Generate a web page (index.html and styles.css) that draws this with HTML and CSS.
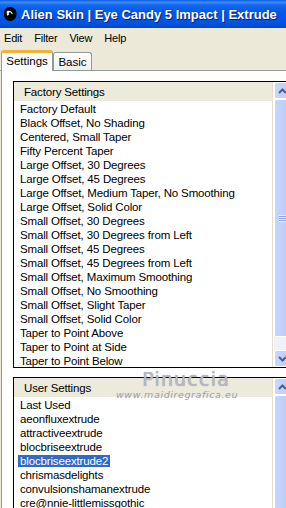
FILE: index.html
```html
<!DOCTYPE html>
<html>
<head>
<meta charset="utf-8">
<link rel="stylesheet" href="styles.css">
</head>
<body>
<div class="window">
  <div class="titlebar">
    <svg class="app-icon" width="14" height="16" viewBox="0 0 14 16">
      <path d="M7 1 C11 1 13.5 4 13.5 8 C13.5 12 11 15 7 15 C3 15 1 12 1 8 C1 4 3 1 7 1 Z" fill="#000"/>
      <path d="M4 5 C6 4 9 5 10 8 C8 7.5 6 8 4.5 10 C3.5 8.5 3.5 6.5 4 5 Z" fill="#fff"/>
      <circle cx="7" cy="7.5" r="1.2" fill="#000"/>
    </svg>
    <span class="title">Alien Skin | Eye Candy 5 Impact | Extrude</span>
  </div>
  <div class="menubar">
    <span class="menu-item">Edit</span>
    <span class="menu-item">Filter</span>
    <span class="menu-item">View</span>
    <span class="menu-item">Help</span>
  </div>
  <div class="tabs">
    <div class="tab active">Settings</div>
    <div class="tab">Basic</div>
  </div>
  <div class="panel">
    <div class="listbox factory">
      <div class="list">
        <div class="list-header">Factory Settings</div>
        <ul class="items">
          <li><span>Factory Default</span></li>
          <li><span>Black Offset, No Shading</span></li>
          <li><span>Centered, Small Taper</span></li>
          <li><span>Fifty Percent Taper</span></li>
          <li><span>Large Offset, 30 Degrees</span></li>
          <li><span>Large Offset, 45 Degrees</span></li>
          <li><span>Large Offset, Medium Taper, No Smoothing</span></li>
          <li><span>Large Offset, Solid Color</span></li>
          <li><span>Small Offset, 30 Degrees</span></li>
          <li><span>Small Offset, 30 Degrees from Left</span></li>
          <li><span>Small Offset, 45 Degrees</span></li>
          <li><span>Small Offset, 45 Degrees from Left</span></li>
          <li><span>Small Offset, Maximum Smoothing</span></li>
          <li><span>Small Offset, No Smoothing</span></li>
          <li><span>Small Offset, Slight Taper</span></li>
          <li><span>Small Offset, Solid Color</span></li>
          <li><span>Taper to Point Above</span></li>
          <li><span>Taper to Point at Side</span></li>
          <li><span>Taper to Point Below</span></li>
        </ul>
      </div>
      <div class="scrollbar">
        <div class="sb-btn up"><svg width="9" height="6" viewBox="0 0 9 6"><path d="M1 5 L4.5 1.5 L8 5" fill="none" stroke="#4d6185" stroke-width="2"/></svg></div>
        <div class="sb-track">
          <div class="sb-thumb factory-thumb"><span class="grip"></span></div>
        </div>
        <div class="sb-btn down"><svg width="9" height="6" viewBox="0 0 9 6"><path d="M1 1 L4.5 4.5 L8 1" fill="none" stroke="#4d6185" stroke-width="2"/></svg></div>
      </div>
    </div>
    <div class="listbox user">
      <div class="list">
        <div class="list-header">User Settings</div>
        <ul class="items">
          <li><span>Last Used</span></li>
          <li><span>aeonfluxextrude</span></li>
          <li><span>attractiveextrude</span></li>
          <li><span>blocbriseextrude</span></li>
          <li class="selected"><span>blocbriseextrude2</span></li>
          <li><span>chrismasdelights</span></li>
          <li><span>convulsionshamanextrude</span></li>
          <li><span>cre@nnie-littlemissgothic</span></li>
        </ul>
      </div>
      <div class="scrollbar">
        <div class="sb-btn up"><svg width="9" height="6" viewBox="0 0 9 6"><path d="M1 5 L4.5 1.5 L8 5" fill="none" stroke="#4d6185" stroke-width="2"/></svg></div>
        <div class="sb-track">
          <div class="sb-thumb user-thumb"></div>
        </div>
      </div>
    </div>
    <div class="watermark">
      <div class="wm-name">Pinuccia</div>
      <div class="wm-url">www.maidiregrafica.eu</div>
    </div>
  </div>
</div>
</body>
</html>
```
FILE: styles.css
```css
html, body {
  margin: 0;
  padding: 0;
}
body {
  width: 286px;
  height: 508px;
  overflow: hidden;
  background: #ece9d8;
  font-family: "Liberation Sans", Arial, sans-serif;
  font-size: 11px;
  letter-spacing: -0.2px;
  color: #000;
}
.window {
  width: 286px;
  height: 508px;
  display: flex;
  flex-direction: column;
}
.titlebar {
  height: 28px;
  flex: none;
  display: flex;
  align-items: center;
  background: linear-gradient(to bottom, #0a5ae6 0%, #3d8cf6 8%, #1367ec 18%, #0058e8 45%, #0054e3 80%, #0048c8 100%);
  padding-left: 3px;
  box-sizing: border-box;
  white-space: nowrap;
  overflow: hidden;
}
.app-icon {
  flex: none;
  margin-right: 4px;
}
.title {
  color: #fff;
  font-weight: bold;
  font-size: 13px;
  letter-spacing: 0;
  text-shadow: 1px 1px 0 #0a1e7a;
}
.menubar {
  height: 20px;
  flex: none;
  display: flex;
  align-items: center;
  gap: 12px;
  padding-left: 4px;
  box-sizing: border-box;
  background: #ece9d8;
}
.tabs {
  height: 23px;
  flex: none;
  display: flex;
  align-items: flex-end;
  padding-left: 1px;
  box-sizing: border-box;
  border-bottom: 1px solid #919b9c;
}
.tab {
  box-sizing: border-box;
  border: 1px solid #919b9c;
  border-bottom: none;
  border-radius: 3px 3px 0 0;
  display: flex;
  align-items: center;
  justify-content: center;
  font-size: 11.5px;
  letter-spacing: 0;
}
.tab.active {
  width: 52px;
  height: 21px;
  margin-bottom: -1px;
  background: #fcfcfe;
  border-top: 3px solid #f4b13a;
  position: relative;
  padding-bottom: 2px;
}
.tab:not(.active) {
  width: 39px;
  height: 18px;
  background: linear-gradient(to bottom, #ffffff, #f0efea);
}
.panel {
  flex: 1;
  background: #fff;
  margin-left: 1px;
  border-left: 1px solid #919b9c;
  padding: 10px 0 0 11px;
  position: relative;
  overflow: hidden;
}
.listbox {
  width: 279px;
  box-sizing: border-box;
  border: 1px solid #000;
  display: flex;
  background: #fff;
  font-size: 11.5px;
  letter-spacing: -0.15px;
}
.listbox.factory {
  height: 287px;
}
.listbox.user {
  height: 140px;
  margin-top: 9px;
}
.list {
  flex: 1;
  overflow: hidden;
  border-right: 1px solid #e6dfcb;
}
.list-header {
  height: 19px;
  line-height: 20px;
  background: #ebeadb;
  padding-left: 10px;
}
.items {
  list-style: none;
  margin: 0;
  padding: 1px 0 0 0;
}
.items li {
  height: 14px;
  line-height: 14px;
  padding-left: 4px;
  white-space: nowrap;
}
.items li span {
  padding: 0 2px;
}
.items li.selected span {
  background: #316ac5;
  color: #fff;
}
.scrollbar {
  width: 17px;
  flex: none;
  margin-left: 1px;
  display: flex;
  flex-direction: column;
  background: #f3f4f8;
}
.sb-btn {
  height: 17px;
  flex: none;
  box-sizing: border-box;
  border: 1px solid #fff;
  border-radius: 2px;
  background: linear-gradient(to right, #c8d7fd, #b9cdfb);
  display: flex;
  align-items: center;
  justify-content: center;
}
.sb-track {
  flex: 1;
  display: flex;
  flex-direction: column;
  background: #f1f2f7;
}
.sb-thumb {
  box-sizing: border-box;
  border: 1px solid #fff;
  border-radius: 2px;
  background: linear-gradient(to right, #c6d6fc, #b8ccf8);
  display: flex;
  align-items: center;
  justify-content: center;
}
.factory-thumb {
  height: 238px;
}
.user-thumb {
  flex: 1;
}
.grip {
  width: 8px;
  height: 7px;
  background: repeating-linear-gradient(to bottom, #eef3ff 0, #eef3ff 1px, #8ca5dc 1px, #8ca5dc 2px);
}
.watermark {
  position: absolute;
  left: 114px;
  top: 298px;
  text-align: center;
  pointer-events: none;
  letter-spacing: 0;
}
.wm-name {
  font-family: "DejaVu Sans", sans-serif;
  font-size: 19px;
  letter-spacing: 1.2px;
  color: #b8b8c4;
  text-shadow: 0 0 1px #8c8c98;
  line-height: 20px;
  padding-left: 18px;
}
.wm-url {
  font-family: "DejaVu Sans", sans-serif;
  font-style: italic;
  font-size: 9.5px;
  letter-spacing: 0.6px;
  color: #9c9ca8;
  line-height: 11px;
}
```
